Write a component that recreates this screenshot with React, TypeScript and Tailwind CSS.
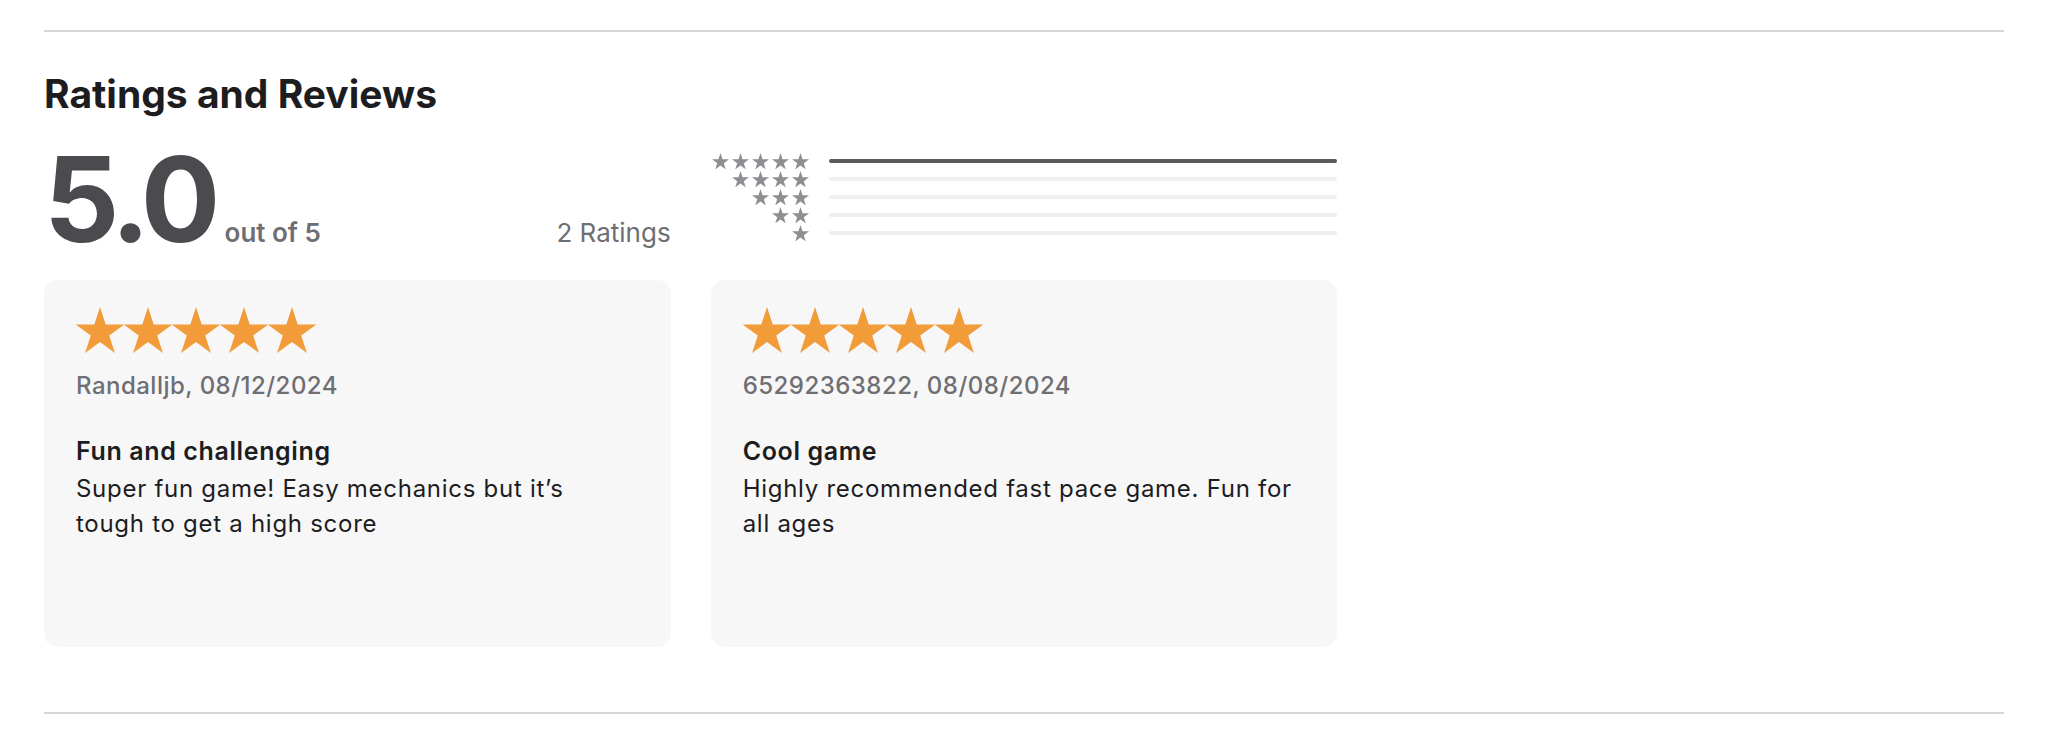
const reviews = [
  {
    author: "Randalljb, 08/12/2024",
    title: "Fun and challenging",
    body: "Super fun game! Easy mechanics but it’s tough to get a high score",
  },
  {
    author: "65292363822, 08/08/2024",
    title: "Cool game",
    body: "Highly recommended fast pace game. Fun for all ages",
  },
];

const STAR = "12,0 14.85,8.78 24.08,8.78 16.61,14.2 19.46,22.97 12,17.55 4.54,22.97 7.39,14.2 -0.08,8.78 9.15,8.78";

function Star({ className }: { className: string }) {
  return (
    <svg viewBox="0 0 24 23" className={className} fill="currentColor">
      <polygon points={STAR} />
    </svg>
  );
}

function Histogram() {
  const rows = [5, 4, 3, 2, 1];
  return (
    <div className="flex flex-col pt-[12px]">
      {rows.map((n) => (
        <div key={n} className="flex h-[18px] items-center gap-[20px]">
          <div className="flex w-[98px] justify-end gap-[3px] text-[#8e8e93]">
            {Array.from({ length: n }).map((_, i) => (
              <Star key={i} className="h-[16.5px] w-[17px]" />
            ))}
          </div>
          <div className="h-[4px] flex-1 rounded-full bg-[#efeff2]">
            {n === 5 && <div className="h-full w-full rounded-full bg-[#5b5b5f]" />}
          </div>
        </div>
      ))}
    </div>
  );
}

function ReviewCard({ author, title, body }: { author: string; title: string; body: string }) {
  return (
    <div className="h-[367px] rounded-[14px] bg-[#f7f7f7] pl-[32px] pr-[40px] pt-[27px]">
      <div className="flex text-[#f19b39]">
        {[0, 1, 2, 3, 4].map((i) => (
          <Star key={i} className="h-[46px] w-[48px]" />
        ))}
      </div>
      <p className="mt-[17px] text-[24px] leading-[32px] font-medium tracking-[0.02em] text-[#6e6e73]">{author}</p>
      <h3 className="mt-[31px] text-[25px] leading-[36px] font-semibold tracking-[0.025em] text-[#1d1d1f]">{title}</h3>
      <p className="mt-[2px] text-[24px] leading-[35px] tracking-[0.03em] text-[#1d1d1f]">{body}</p>
    </div>
  );
}

export default function App() {
  return (
    <div className="min-h-screen bg-white font-['Inter',sans-serif]">
      <div className="ml-[44px] w-[1960px] pt-[30px]">
        <div className="h-[2px] bg-[#d6d6d8]" />
        <h2 className="mt-[39px] text-[39px] leading-[46px] font-bold text-[#1d1d1f]">
          Ratings and Reviews
        </h2>
        <div className="mt-[23px] grid grid-cols-3 gap-x-[40px] gap-y-[22px]">
          <div className="flex items-baseline justify-between">
            <div className="flex items-baseline gap-[10px]">
              <span className="text-[118px] leading-none font-bold tracking-[-0.05em] text-[#4b4b4f]">5.0</span>
              <span className="text-[26px] font-semibold text-[#6e6e73]">out of 5</span>
            </div>
            <span className="text-[26px] text-[#6e6e73]">2 Ratings</span>
          </div>
          <Histogram />
          <div />
          {reviews.map((r) => (
            <ReviewCard key={r.author} {...r} />
          ))}
        </div>
        <div className="mt-[65px] h-[2px] bg-[#d6d6d8]" />
      </div>
    </div>
  );
}
